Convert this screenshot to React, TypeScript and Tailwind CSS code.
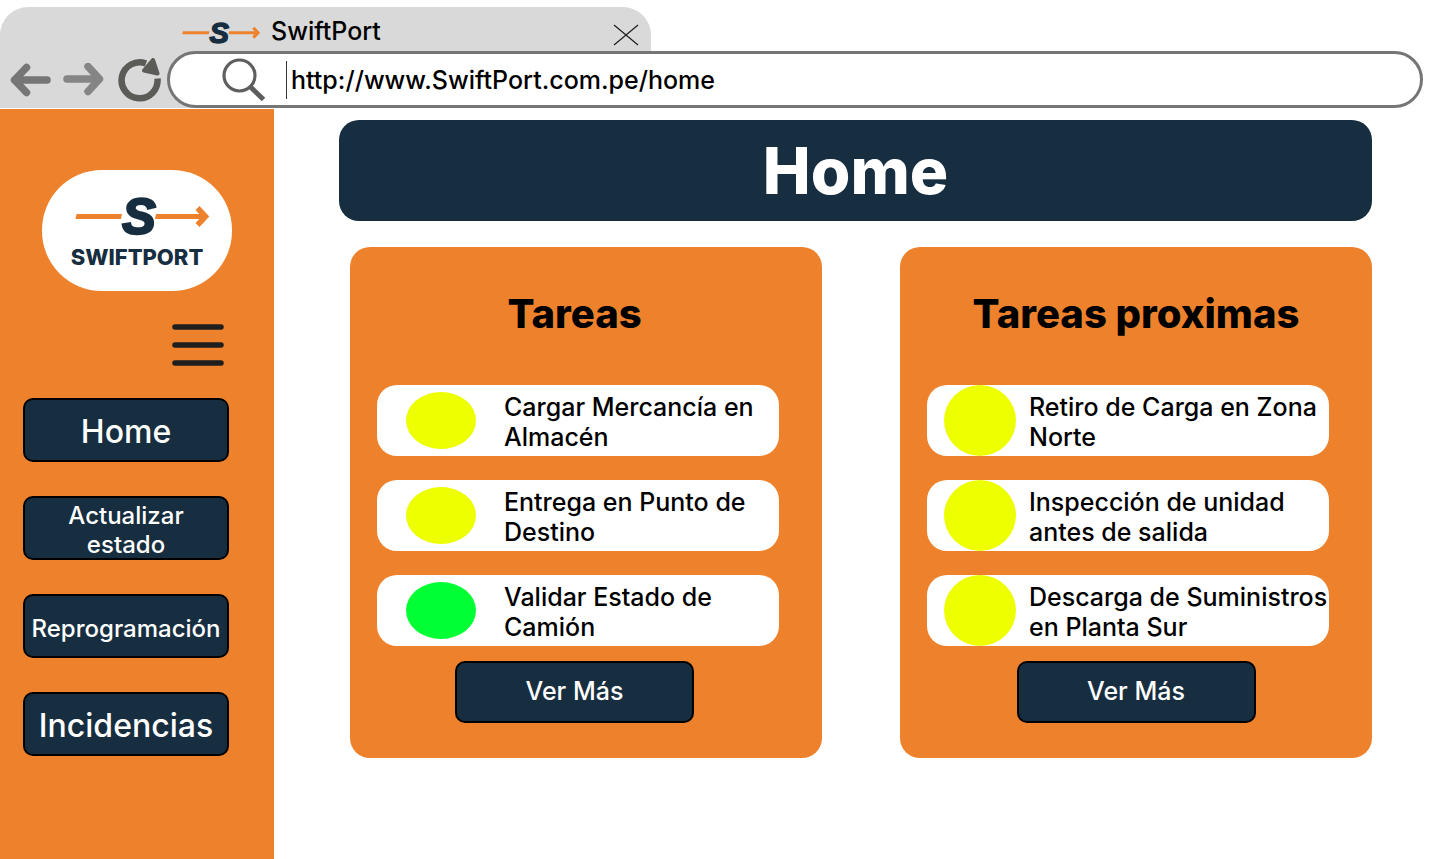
import React from "react";

type Task = { text: string; dot: string };

const yellow = "bg-[#eeff00]";
const green = "bg-[#00ff33]";

const currentTasks: Task[] = [
  { text: "Cargar Mercancía en Almacén", dot: yellow },
  { text: "Entrega en Punto de Destino", dot: yellow },
  { text: "Validar Estado de Camión", dot: green },
];

const upcomingTasks: Task[] = [
  { text: "Retiro de Carga en Zona Norte", dot: yellow },
  { text: "Inspección de unidad antes de salida", dot: yellow },
  { text: "Descarga de Suministros en Planta Sur", dot: yellow },
];

const navItems = [
  { label: "Home", size: "text-[32px] leading-[38px]" },
  { label: "Actualizar estado", size: "px-8 text-2xl leading-[29px]" },
  { label: "Reprogramación", size: "text-2xl leading-[29px]" },
  { label: "Incidencias", size: "text-[32px] leading-[38px]" },
];

function LogoMark({ className }: { className: string }) {
  return (
    <svg viewBox="0 0 134 40" className={`overflow-visible ${className}`} aria-hidden="true">
      <path d="M1.500 17H47L46 22H0.500Z" fill="#ee822c" />
      <path d="M81 17H127V22H80Z" fill="#ee822c" />
      <path d="M122.500 11L130.500 19.500L122.500 28" fill="none" stroke="#ee822c" strokeWidth="5.500" />
      <text
        x="64"
        y="37"
        textAnchor="middle"
        fontFamily="Liberation Sans, Arial, sans-serif"
        fontWeight="700"
        fontStyle="italic"
        fontSize="50"
        fill="#172e40"
        stroke="#172e40"
        strokeWidth="2.5"
      >
        S
      </text>
    </svg>
  );
}

function BrowserBar() {
  return (
    <header className="pt-[7px]">
      <div className="flex h-11 w-[651px] max-w-full items-center rounded-t-[28px] bg-[#d9d9d9] pl-[182px] pr-3 pt-1">
        <LogoMark className="mt-1 h-6 w-[78px] shrink-0" />
        <span className="ml-[11px] flex-1 text-[25px] font-medium leading-[30px]">SwiftPort</span>
        <button type="button" aria-label="Cerrar pestaña" className="mt-2">
          <svg width="26" height="22" viewBox="0 0 26 22" fill="none" stroke="#1e1e1e" strokeWidth="1.2">
            <path d="M1 1L25 21M25 1L1 21" />
          </svg>
        </button>
      </div>
      <div className="flex h-[57px]">
        <div className="flex w-[195px] shrink-0 items-center bg-[#d9d9d9] pl-[10px]">
          <button type="button" aria-label="Atrás">
            <svg width="42" height="34" viewBox="0 0 42 34" fill="none" stroke="#767676" strokeWidth="7.5">
              <path d="M5 17H37" strokeLinecap="round" />
              <path d="M16.500 4.500L4.500 17L16.500 29.500" strokeLinecap="round" strokeLinejoin="round" />
            </svg>
          </button>
          <button type="button" aria-label="Adelante" className="ml-[10px]">
            <svg width="42" height="34" viewBox="0 0 42 34" fill="none" stroke="#858585" strokeWidth="7.5">
              <path d="M5 16H37" strokeLinecap="round" />
              <path d="M26 3.500L37.500 16L26 28.500" strokeLinecap="round" strokeLinejoin="round" />
            </svg>
          </button>
          <button type="button" aria-label="Recargar" className="ml-[14px]">
            <svg width="44" height="44" viewBox="0 0 44 44" fill="none">
              <path d="M39.500 20.500A18 18 0 1 1 28 5.500" stroke="#5b5b57" strokeWidth="6.500" />
              <path d="M26 12.500L35 2L39.500 15.500Z" fill="#5b5b57" stroke="#5b5b57" strokeWidth="4" strokeLinejoin="round" />
            </svg>
          </button>
        </div>
        <form
          className="-ml-[28px] mr-[17px] flex flex-1 items-center rounded-full border-[3px] border-[#757575] bg-white pl-[52px] pr-8"
          onSubmit={(e) => e.preventDefault()}
        >
          <svg width="44" height="44" viewBox="0 0 44 44" fill="none" stroke="#5e5e5e" className="shrink-0">
            <circle cx="17.500" cy="17.500" r="15.500" strokeWidth="3.200" />
            <path d="M28 28.500L41.500 41.500" strokeWidth="5" />
          </svg>
          <input
            type="text"
            aria-label="Dirección"
            defaultValue="http://www.SwiftPort.com.pe/home"
            className="ml-5 h-[38px] min-w-0 flex-1 border-l border-[#333333] bg-transparent pl-1 text-[25px] font-medium leading-[30px] outline-none"
          />
        </form>
      </div>
    </header>
  );
}

function Sidebar() {
  return (
    <aside className="w-[274px] shrink-0 bg-[#ee822c] pb-24 pl-[23px] pt-[61px]">
      <div className="ml-[19px] flex h-[121px] w-[190px] flex-col items-center rounded-[60px] bg-white pt-[27px]">
        <LogoMark className="ml-[10px] h-10 w-[134px]" />
        <span className="mt-[7px] text-[22px] font-extrabold leading-[26px] text-[#172e40]">SWIFTPORT</span>
      </div>
      <button type="button" aria-label="Menú" className="ml-[149px] mt-[33px] block">
        <svg width="52" height="42" viewBox="0 0 52 42" stroke="#1e1e1e" strokeWidth="5.500" strokeLinecap="round">
          <path d="M3 3H49M3 21H49M3 39H49" />
        </svg>
      </button>
      <nav className="mt-8 flex flex-col gap-[34px]">
        {navItems.map((item) => (
          <button
            key={item.label}
            type="button"
            className={`flex h-16 w-[206px] items-center justify-center rounded-[10px] border-2 border-black bg-[#172e40] pt-1 font-[450] text-white ${item.size}`}
          >
            {item.label}
          </button>
        ))}
      </nav>
    </aside>
  );
}

type CardProps = {
  title: string;
  tasks: Task[];
  centering: string;
  listClass: string;
  rowClass: string;
  dotClass: string;
};

function TaskCard({ title, tasks, centering, listClass, rowClass, dotClass }: CardProps) {
  return (
    <section className="rounded-[20px] bg-[#ee822c] pb-[35px] pt-[43px]">
      <h2 className={`text-center text-[40px] font-extrabold leading-[48px] ${centering}`}>{title}</h2>
      <ul className={`mt-[47px] flex flex-col gap-6 ${listClass}`}>
        {tasks.map((task) => (
          <li
            key={task.text}
            className={`flex h-[71px] items-center rounded-[20px] bg-white text-[25px] font-[450] leading-[30px] ${rowClass}`}
          >
            <span className={`shrink-0 rounded-[50%] ${dotClass} ${task.dot}`} />
            <span className="pt-[2px]">{task.text}</span>
          </li>
        ))}
      </ul>
      <div className={`mt-[15px] flex justify-center ${centering}`}>
        <button
          type="button"
          className="h-[62px] w-[239px] rounded-[10px] border-2 border-black bg-[#172e40] text-[25px] font-[450] text-white"
        >
          Ver Más
        </button>
      </div>
    </section>
  );
}

export default function App() {
  return (
    <div className="flex min-h-screen flex-col bg-white font-['Inter',sans-serif] text-black">
      <BrowserBar />
      <div className="mt-px flex flex-1">
        <Sidebar />
        <main className="min-w-0 flex-1 pb-10 pl-[65px] pr-[68px] pt-[11px]">
          <h1 className="rounded-[20px] bg-[#172e40] py-3 text-center text-[64px] font-extrabold leading-[77px] text-white">
            Home
          </h1>
          <div className="mt-[26px] grid grid-cols-2 gap-[78px] pl-[11px]">
            <TaskCard
              title="Tareas"
              tasks={currentTasks}
              centering="pr-[23px]"
              listClass="pl-[27px] pr-[43px]"
              rowClass="gap-[28px] pl-[29px]"
              dotClass="h-[57px] w-[70px]"
            />
            <TaskCard
              title="Tareas proximas"
              tasks={upcomingTasks}
              centering=""
              listClass="pl-[27px] pr-[43px]"
              rowClass="gap-[13px] pl-[17px]"
              dotClass="h-[71px] w-[72px]"
            />
          </div>
        </main>
      </div>
    </div>
  );
}
